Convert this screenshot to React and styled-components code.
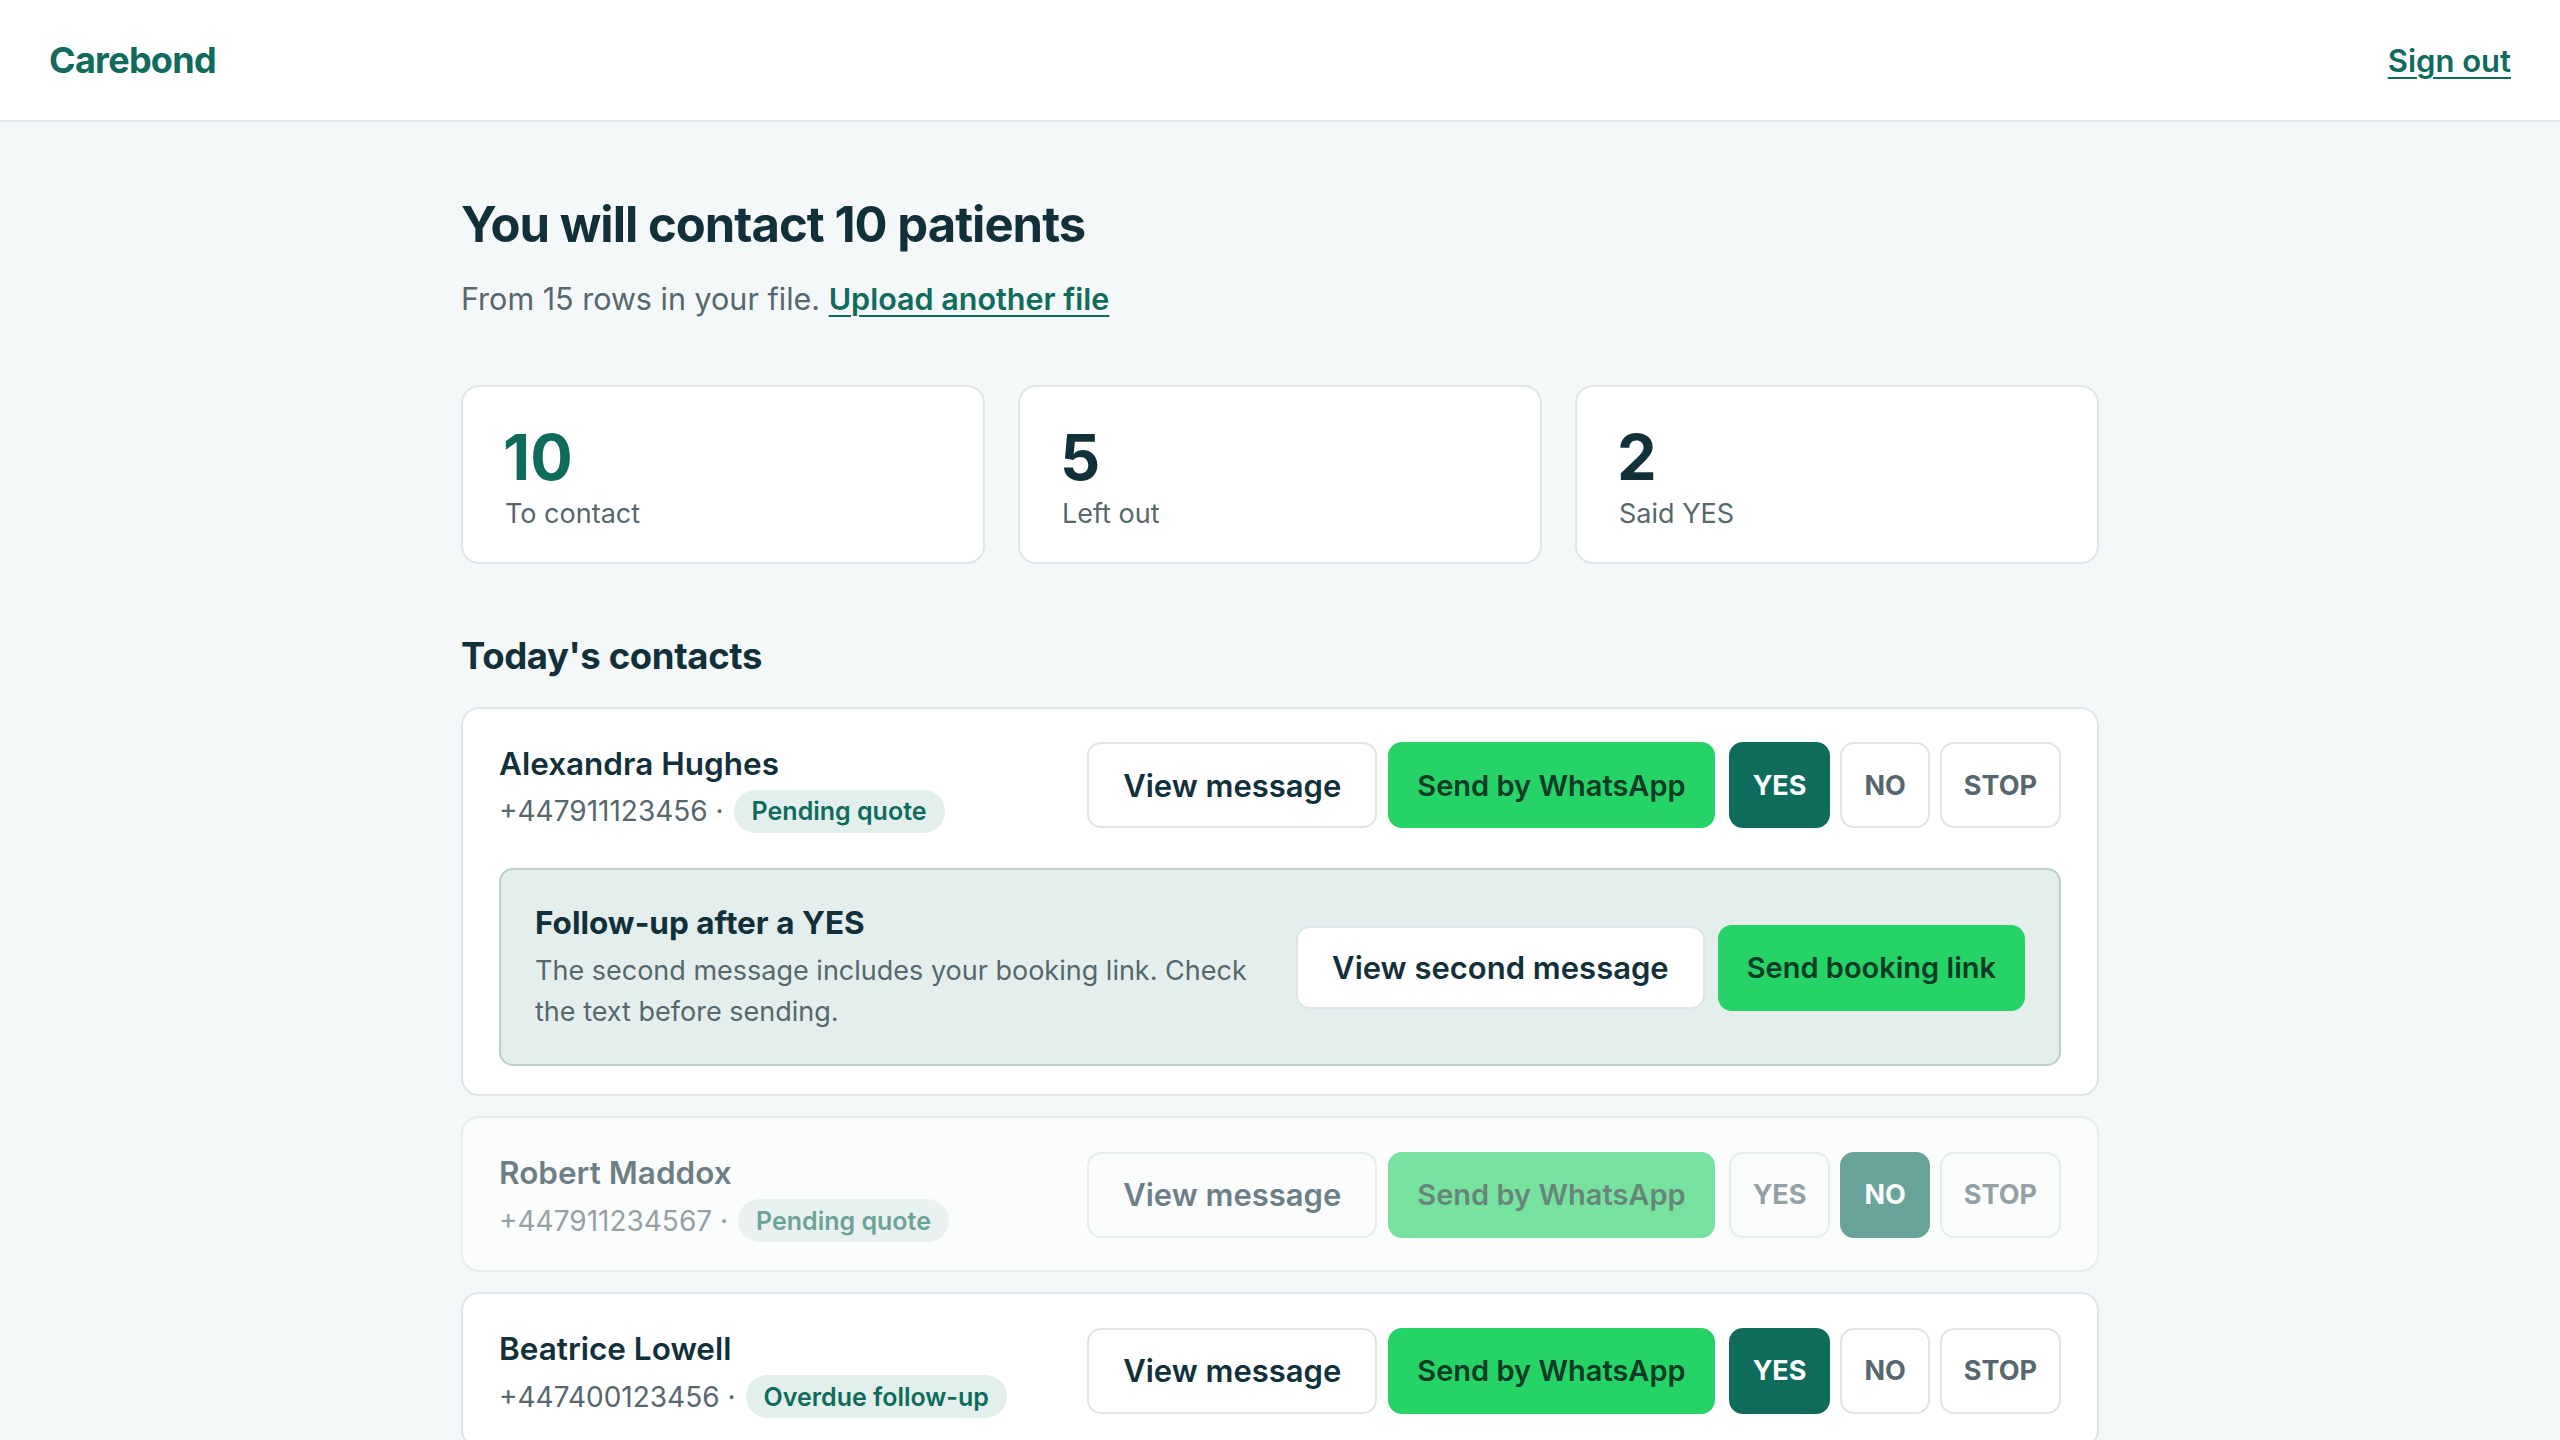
import React from 'react';
import styled, { createGlobalStyle } from 'styled-components';

const GlobalStyle = createGlobalStyle`
  * {
    box-sizing: border-box;
  }

  body {
    margin: 0;
    background: #f5f8f9;
    font-family: Inter, 'Noto Sans', 'Liberation Sans', sans-serif;
    color: #12303a;
  }
`;

const Header = styled.header`
  height: 122px;
  padding: 0 49px;
  display: flex;
  align-items: center;
  justify-content: space-between;
  background: #fff;
  border-bottom: 2px solid #e1e7ea;
`;

const Brand = styled.div`
  font-size: 36px;
  font-weight: 700;
  letter-spacing: -0.02em;
  color: #0f6b5c;
`;

const SignOut = styled.a`
  font-size: 31px;
  font-weight: 600;
  color: #0f6b5c;
  text-decoration: underline;
  text-decoration-thickness: 2px;
  text-underline-offset: 5px;
  cursor: pointer;
`;

const Main = styled.main`
  max-width: 1638px;
  margin: 0 auto;
  padding: 74px 0 60px;
`;

const Title = styled.h1`
  margin: 0;
  font-size: 49px;
  line-height: 1.2;
  font-weight: 700;
  letter-spacing: -0.02em;
`;

const Lead = styled.p`
  margin: 22px 0 0;
  font-size: 30.5px;
  line-height: 1.45;
  color: #56676e;
`;

const InlineLink = styled.a`
  color: #0f6b5c;
  font-weight: 600;
  text-decoration: underline;
  text-decoration-thickness: 2px;
  text-underline-offset: 5px;
  cursor: pointer;
`;

const Stats = styled.div`
  margin-top: 64px;
  display: grid;
  grid-template-columns: repeat(3, 1fr);
  gap: 33px;
`;

const StatCard = styled.div`
  height: 179px;
  padding: 36px 42px 0 40px;
  background: #fff;
  border: 2px solid #e0e6e9;
  border-radius: 18px;
`;

const StatValue = styled.div`
  font-size: 63px;
  line-height: 1.1;
  font-weight: 700;
  color: ${(p) => (p.$accent ? '#0f6b5c' : '#12303a')};
`;

const StatLabel = styled.div`
  margin-top: 3px;
  padding-left: 2px;
  font-size: 27px;
  line-height: 1.4;
  color: #56676e;
`;

const SectionTitle = styled.h2`
  margin: 70px 0 27px;
  font-size: 36.5px;
  line-height: 1.25;
  font-weight: 700;
  letter-spacing: -0.01em;
`;

const ContactList = styled.div`
  display: flex;
  flex-direction: column;
  gap: 20px;
`;

const ContactCard = styled.div`
  padding: 29px 36px 28px;
  background: #fff;
  border: 2px solid #e0e6e9;
  border-radius: 18px;
  opacity: ${(p) => (p.$dim ? 0.6 : 1)};
`;

const ContactRow = styled.div`
  display: flex;
  align-items: center;
  justify-content: space-between;
  gap: 32px;
`;

const Person = styled.div`
  padding-top: 6px;
`;

const Name = styled.div`
  font-size: 31.5px;
  line-height: 1.3;
  font-weight: 600;
`;

const Meta = styled.div`
  margin-top: 5px;
  display: flex;
  align-items: center;
  gap: 10px;
  font-size: 28px;
  color: #56676e;
`;

const Badge = styled.span`
  height: 43px;
  padding: 0 18px;
  display: inline-flex;
  align-items: center;
  border-radius: 999px;
  background: #e3efec;
  color: #0f6b5c;
  font-size: 25px;
  font-weight: 600;
`;

const Actions = styled.div`
  display: flex;
  flex-shrink: 0;
  align-items: center;
  gap: ${(p) => p.$gap || 12}px;
`;

const buttonTones = {
  outline: 'background: #fff; color: #12303a; border-color: #dfe5e8; font-size: 31px; padding: 0 34px;',
  whatsapp: 'background: #25d366; color: #0b3a25; border-color: #25d366; font-size: 29px; padding: 0 27px;',
  chosen: 'background: #0f6b5c; color: #fff; border-color: #0f6b5c; font-size: 27px; padding: 0 22px; font-weight: 700;',
  plain: 'background: #fff; color: #56676e; border-color: #dfe5e8; font-size: 27px; padding: 0 22px; font-weight: 700;',
};

const Button = styled.button`
  height: ${(p) => (p.$short ? '83px' : '86px')};
  border: 2px solid;
  border-radius: 14px;
  font-family: inherit;
  font-weight: 600;
  white-space: nowrap;
  cursor: pointer;
  ${(p) => buttonTones[p.$tone || 'outline']}
`;

const FollowUp = styled.div`
  margin-top: 35px;
  padding: 33px 34px 31px;
  display: flex;
  align-items: center;
  justify-content: space-between;
  gap: 40px;
  background: #e4efed;
  border: 2px solid #bccfcb;
  border-radius: 14px;
`;

const FollowTitle = styled.div`
  font-size: 31.5px;
  line-height: 1.3;
  font-weight: 700;
`;

const FollowText = styled.p`
  margin: 6px 0 0;
  font-size: 27px;
  line-height: 1.55;
  color: #56676e;
`;

const contacts = [
  {
    name: 'Alexandra Hughes',
    phone: '+447911123456',
    status: 'Pending quote',
    answer: 'YES',
    followUp: true,
  },
  {
    name: 'Robert Maddox',
    phone: '+447911234567',
    status: 'Pending quote',
    answer: 'NO',
    dim: true,
  },
  {
    name: 'Beatrice Lowell',
    phone: '+447400123456',
    status: 'Overdue follow-up',
    answer: 'YES',
  },
];

function Contact({ contact }) {
  return (
    <ContactCard $dim={contact.dim}>
      <ContactRow>
        <Person>
          <Name>{contact.name}</Name>
          <Meta>
            <span>{contact.phone} ·</span>
            <Badge>{contact.status}</Badge>
          </Meta>
        </Person>
        <Actions $gap={14}>
          <Actions $gap={11}>
            <Button>View message</Button>
            <Button $tone="whatsapp">Send by WhatsApp</Button>
          </Actions>
          <Actions $gap={10}>
            {['YES', 'NO', 'STOP'].map((a) => (
              <Button key={a} $tone={contact.answer === a ? 'chosen' : 'plain'}>
                {a}
              </Button>
            ))}
          </Actions>
        </Actions>
      </ContactRow>
      {contact.followUp && (
        <FollowUp>
          <div>
            <FollowTitle>Follow-up after a YES</FollowTitle>
            <FollowText>
              The second message includes your booking link. Check the text before sending.
            </FollowText>
          </div>
          <Actions $gap={13}>
            <Button $short>View second message</Button>
            <Button $tone="whatsapp">Send booking link</Button>
          </Actions>
        </FollowUp>
      )}
    </ContactCard>
  );
}

export default function App() {
  return (
    <>
      <GlobalStyle />
      <Header>
        <Brand>Carebond</Brand>
        <SignOut>Sign out</SignOut>
      </Header>
      <Main>
        <Title>You will contact 10 patients</Title>
        <Lead>
          From 15 rows in your file. <InlineLink>Upload another file</InlineLink>
        </Lead>
        <Stats>
          <StatCard>
            <StatValue $accent>10</StatValue>
            <StatLabel>To contact</StatLabel>
          </StatCard>
          <StatCard>
            <StatValue>5</StatValue>
            <StatLabel>Left out</StatLabel>
          </StatCard>
          <StatCard>
            <StatValue>2</StatValue>
            <StatLabel>Said YES</StatLabel>
          </StatCard>
        </Stats>
        <SectionTitle>Today's contacts</SectionTitle>
        <ContactList>
          {contacts.map((c) => (
            <Contact key={c.name} contact={c} />
          ))}
        </ContactList>
      </Main>
    </>
  );
}
